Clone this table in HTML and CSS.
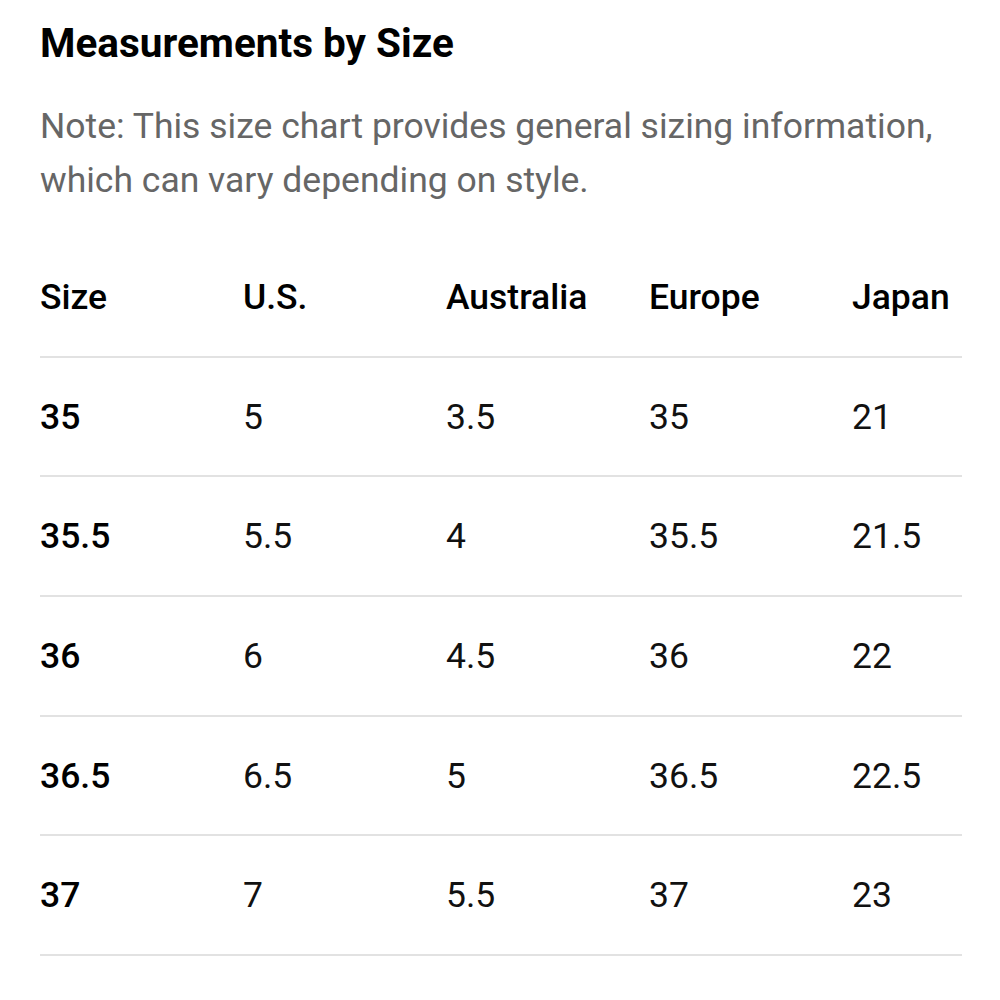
FILE: index.html
```html
<!DOCTYPE html>
<html>
<head>
<meta charset="utf-8">
<link rel="stylesheet" href="styles.css">
</head>
<body>
<div class="page">
  <h1 class="title">Measurements by Size</h1>
  <p class="note">Note: This size chart provides general sizing information, which can vary depending on style.</p>
  <div class="table">
    <div class="row head">
      <div class="cell">Size</div><div class="cell">U.S.</div><div class="cell">Australia</div><div class="cell">Europe</div><div class="cell">Japan</div>
    </div>
    <div class="row">
      <div class="cell key">35</div><div class="cell">5</div><div class="cell">3.5</div><div class="cell">35</div><div class="cell">21</div>
    </div>
    <div class="row">
      <div class="cell key">35.5</div><div class="cell">5.5</div><div class="cell">4</div><div class="cell">35.5</div><div class="cell">21.5</div>
    </div>
    <div class="row">
      <div class="cell key">36</div><div class="cell">6</div><div class="cell">4.5</div><div class="cell">36</div><div class="cell">22</div>
    </div>
    <div class="row">
      <div class="cell key">36.5</div><div class="cell">6.5</div><div class="cell">5</div><div class="cell">36.5</div><div class="cell">22.5</div>
    </div>
    <div class="row">
      <div class="cell key">37</div><div class="cell">7</div><div class="cell">5.5</div><div class="cell">37</div><div class="cell">23</div>
    </div>
    <div class="row">
      <div class="cell key">37.5</div><div class="cell">7.5</div><div class="cell">6</div><div class="cell">37.5</div><div class="cell">23.5</div>
    </div>
  </div>
</div>
</body>
</html>
```
FILE: styles.css
```css
html, body {
  margin: 0;
  padding: 0;
  background: #fff;
}
body {
  font-family: Roboto, "Liberation Sans", sans-serif;
  color: #111;
  overflow: hidden;
  height: 1000px;
}
.page {
  padding: 18px 38px 0 40px;
}
.title {
  margin: 0;
  font-size: 40.5px;
  font-weight: 700;
  line-height: 50px;
  color: #000;
}
.note {
  margin: 31px 0 0 0;
  font-size: 35.5px;
  line-height: 54px;
  color: #666;
}
.table {
  margin-top: 31px;
}
.row {
  display: grid;
  grid-template-columns: 203px 203px 203px 203px 1fr;
  height: 119.7px;
  align-items: center;
  border-bottom: 2px solid #e2e2e2;
  box-sizing: border-box;
}
.cell {
  font-size: 35.5px;
  font-weight: 400;
  color: #111;
  white-space: nowrap;
}
.head .cell {
  font-weight: 500;
  color: #000;
}
.key {
  font-weight: 500;
  color: #000;
}
```
